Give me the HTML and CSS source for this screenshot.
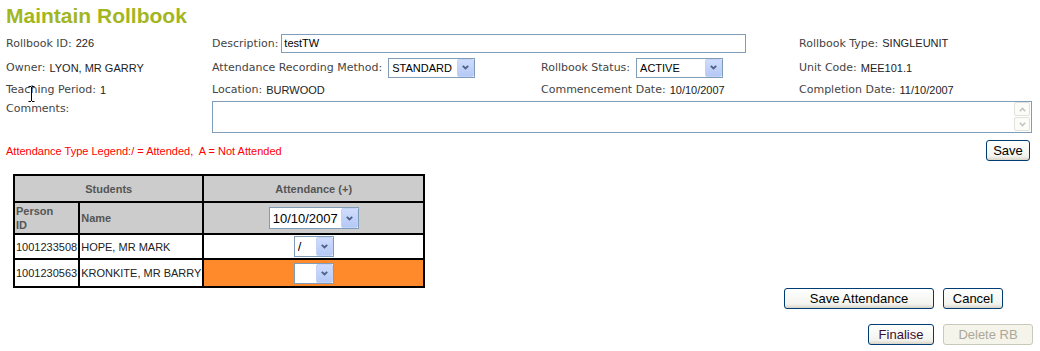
FILE: index.html
```html
<!DOCTYPE html>
<html lang="en">
<head>
  <meta charset="UTF-8">
  <title>Maintain Rollbook</title>
  <link rel="stylesheet" href="styles.css">
</head>
<body>

  <h1 class="page-title">Maintain Rollbook</h1>

  <!-- rollbook details -->
  <div class="details">
    <div class="field"><span class="lbl">Rollbook ID:</span><span class="val">226</span></div>
    <div class="field field-span">
      <span class="lbl">Description:</span>
      <input class="text-input" type="text" value="testTW">
    </div>
    <div class="field"><span class="lbl">Rollbook Type:</span><span class="val">SINGLEUNIT</span></div>

    <div class="field"><span class="lbl">Owner:</span><span class="val">LYON, MR GARRY</span></div>
    <div class="field">
      <span class="lbl">Attendance Recording Method:</span>
      <span class="combo combo-field">
        <select><option>STANDARD</option></select>
        <span class="combo-arrow"><svg width="7" height="5" viewBox="0 0 7 5"><polyline points="0.8,0.8 3.5,3.5 6.2,0.8"/></svg></span>
      </span>
    </div>
    <div class="field">
      <span class="lbl">Rollbook Status:</span>
      <span class="combo combo-field">
        <select><option>ACTIVE</option></select>
        <span class="combo-arrow"><svg width="7" height="5" viewBox="0 0 7 5"><polyline points="0.8,0.8 3.5,3.5 6.2,0.8"/></svg></span>
      </span>
    </div>
    <div class="field"><span class="lbl">Unit Code:</span><span class="val">MEE101.1</span></div>

    <div class="field"><span class="lbl">Teaching Period:</span><span class="val">1</span></div>
    <div class="field"><span class="lbl">Location:</span><span class="val">BURWOOD</span></div>
    <div class="field"><span class="lbl">Commencement Date:</span><span class="val">10/10/2007</span></div>
    <div class="field"><span class="lbl">Completion Date:</span><span class="val">11/10/2007</span></div>

    <div class="field field-top"><span class="lbl">Comments:</span></div>
    <div class="comments-box">
      <textarea></textarea>
      <div class="scroll">
        <span class="sb-btn"><svg width="7" height="5" viewBox="0 0 7 5"><polyline points="0.8,4.2 3.5,1.5 6.2,4.2"/></svg></span>
        <span class="sb-btn"><svg width="7" height="5" viewBox="0 0 7 5"><polyline points="0.8,0.8 3.5,3.5 6.2,0.8"/></svg></span>
      </div>
    </div>
  </div>

  <div class="legend-bar">
    <span class="legend">Attendance Type Legend:/ = Attended,&nbsp; A = Not Attended</span>
    <button class="btn btn-save">Save</button>
  </div>

  <!-- attendance grid -->
  <table class="roll">
    <colgroup>
      <col class="c-id">
      <col class="c-name">
      <col class="c-att">
    </colgroup>
    <tr class="row-head">
      <th colspan="2">Students</th>
      <th>Attendance (+)</th>
    </tr>
    <tr class="row-sub">
      <th class="left top">Person<br>ID</th>
      <th class="left">Name</th>
      <th>
        <span class="combo combo-date">
          <select><option>10/10/2007</option></select>
          <span class="combo-arrow"><svg width="7" height="5" viewBox="0 0 7 5"><polyline points="0.8,0.8 3.5,3.5 6.2,0.8"/></svg></span>
        </span>
      </th>
    </tr>
    <tr class="row-a">
      <td>1001233508</td>
      <td>HOPE, MR MARK</td>
      <td class="att">
        <span class="combo combo-mark">
          <select><option>/</option><option>A</option></select>
          <span class="combo-arrow"><svg width="7" height="5" viewBox="0 0 7 5"><polyline points="0.8,0.8 3.5,3.5 6.2,0.8"/></svg></span>
        </span>
      </td>
    </tr>
    <tr class="row-b">
      <td>1001230563</td>
      <td>KRONKITE, MR BARRY</td>
      <td class="att missing">
        <span class="combo combo-mark">
          <select><option></option><option>/</option><option>A</option></select>
          <span class="combo-arrow"><svg width="7" height="5" viewBox="0 0 7 5"><polyline points="0.8,0.8 3.5,3.5 6.2,0.8"/></svg></span>
        </span>
      </td>
    </tr>
  </table>

  <div class="actions actions-main">
    <button class="btn btn-wide">Save Attendance</button>
    <button class="btn btn-cancel">Cancel</button>
  </div>

  <div class="actions actions-rb">
    <button class="btn btn-final">Finalise</button>
    <button class="btn btn-delete" disabled>Delete RB</button>
  </div>

  <!-- mouse pointer caught in the screenshot -->
  <svg class="cursor" width="7" height="16" viewBox="0 0 7 16">
    <path d="M0.5 0.5h2.5M4 0.5h2.5M3.5 1v14M0.5 15.5h2.5M4 15.5h2.5"/>
  </svg>

</body>
</html>
```

FILE: styles.css
```css
/* Basic page setup */
body {
  margin: 0;
  padding: 0 6px;
  font-family: "DejaVu Sans", Verdana, sans-serif;
  font-size: 11px;
  color: #444;
  background-color: #fff;
  position: relative;
}

.page-title {
  margin: 0;
  padding-top: 3px;
  font: bold 21px/26px "Liberation Sans", Arial, sans-serif;
  color: #a3b61f;
}

/* details grid */
.details {
  display: grid;
  grid-template-columns: 206px 329px 258px 1fr;
  grid-template-rows: 20px 21px 15px 32px;
  row-gap: 4px;
  margin-top: 4px;
  align-items: center;
}
.field {
  display: flex;
  align-items: center;
  white-space: nowrap;
}
.field-span {
  grid-column: 2 / 4;
}
.field-top {
  align-self: start;
  padding-top: 1px;
}
.val {
  font-family: "Liberation Sans", Arial, sans-serif;
  color: #222;
  margin-left: 4px;
}
.text-input {
  margin: 0 0 0 3px;
  width: 465px;
  height: 19px;
  box-sizing: border-box;
  border: 1px solid #7f9db9;
  padding: 0 2px;
  font: 11px "Liberation Sans", Arial, sans-serif;
  color: #000;
  outline: none;
}

/* dropdowns */
.combo {
  position: relative;
  display: inline-block;
  vertical-align: middle;
}
.combo select {
  -webkit-appearance: none;
  appearance: none;
  display: block;
  border: 1px solid #7f9db9;
  border-radius: 0;
  background: #fff;
  color: #000;
  margin: 0;
  padding: 0 0 0 3px;
  box-sizing: border-box;
  outline: none;
}
.combo-arrow {
  position: absolute;
  right: 1px;
  top: 1px;
  bottom: 1px;
  width: 17px;
  box-sizing: border-box;
  border: 1px solid #c3d2f6;
  border-radius: 2px;
  background: linear-gradient(#cfdcfd, #b5c9f6);
  display: flex;
  align-items: center;
  justify-content: center;
  pointer-events: none;
}
.combo-arrow polyline {
  fill: none;
  stroke: #4d6185;
  stroke-width: 1.8;
}
.combo-field {
  margin-left: 6px;
}
.combo-field select {
  width: 87px;
  height: 20px;
  font: 11px "Liberation Sans", Arial, sans-serif;
}
.combo-date select {
  width: 90px;
  height: 22px;
  font: 13px "Liberation Sans", Arial, sans-serif;
}
.combo-mark select {
  width: 40px;
  height: 21px;
  font: 13px "Liberation Sans", Arial, sans-serif;
}

/* comments */
.comments-box {
  grid-column: 2 / 5;
  align-self: stretch;
  display: flex;
  border: 1px solid #7f9db9;
  box-sizing: border-box;
  margin-right: 2px;
}
.comments-box textarea {
  flex: 1;
  border: 0;
  resize: none;
  outline: none;
  margin: 0;
  font: 11px "Liberation Sans", Arial, sans-serif;
}
.scroll {
  width: 16px;
  display: flex;
  flex-direction: column;
  gap: 1px;
  padding: 0 1px 1px 0;
}
.sb-btn {
  flex: 1;
  border: 1px solid #e2e2dc;
  border-radius: 2px;
  background: #fbfbf8;
  display: flex;
  align-items: center;
  justify-content: center;
}
.sb-btn polyline {
  fill: none;
  stroke: #c4c4c0;
  stroke-width: 1.6;
}

/* legend and save */
.legend-bar {
  display: flex;
  justify-content: space-between;
  align-items: center;
  margin-top: 7px;
  padding-right: 4px;
}
.legend {
  font-family: "Liberation Sans", Arial, sans-serif;
  color: #f00;
}

/* buttons */
.btn {
  height: 21px;
  padding: 0;
  margin: 0;
  font: 13px "Liberation Sans", Arial, sans-serif;
  color: #000;
  border: 1px solid #003c74;
  border-radius: 3px;
  background: linear-gradient(#ffffff, #f3f3ee 80%, #d8d3c6);
}
.btn-save { width: 44px; }
.btn-wide { width: 150px; }
.btn-cancel { width: 60px; }
.btn-final { width: 66px; color: #3a1030; }
.btn-delete {
  width: 90px;
  color: #aca899;
  border-color: #cac8bb;
  background: #f5f4ea;
}

/* attendance table */
.roll {
  margin: 13px 0 0 7px;
  width: 412px;
  border-collapse: collapse;
  border: 2px solid #000;
  font-family: "Liberation Sans", Arial, sans-serif;
}
.roll th,
.roll td {
  border: 2px solid #000;
  padding: 0 1px;
}
.roll th {
  background-color: #ccc;
  color: #555;
  font-weight: bold;
  font-size: 11px;
  text-align: center;
}
.roll th.left { text-align: left; }
.roll th.top { vertical-align: top; line-height: 14px; padding-top: 1px; }
.roll td {
  font-size: 11px;
  color: #222;
  white-space: nowrap;
}
.c-id { width: 63px; }
.c-name { width: 123px; }
.roll .att { text-align: center; }
.roll .missing { background-color: #ff8a2b; }
.row-head th { height: 25px; }
.row-sub th { height: 29px; }
.row-a td { height: 23px; }
.row-b td { height: 26px; }
.roll .combo { vertical-align: middle; }

/* bottom actions */
.actions {
  display: flex;
  justify-content: flex-end;
  gap: 9px;
}
.actions-main {
  margin-top: 0;
  padding-right: 31px;
}
.actions-rb {
  margin-top: 15px;
  padding-right: 1px;
}

.cursor {
  position: absolute;
  left: 28px;
  top: 86px;
}
.cursor path {
  stroke: #000;
  stroke-width: 1;
  fill: none;
}
```
